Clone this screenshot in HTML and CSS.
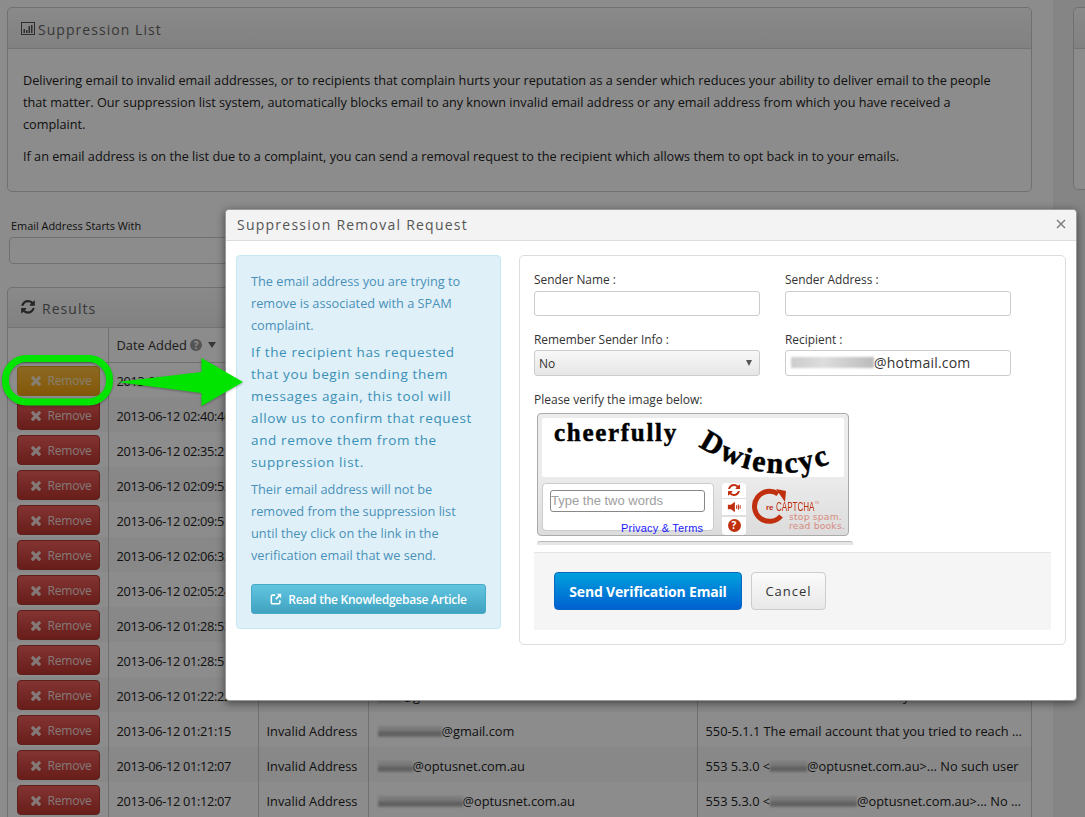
FILE: index.html
```html
<!DOCTYPE html>
<html lang="en">
<head>
<meta charset="utf-8">
<title>Suppression List</title>
<link rel="stylesheet" href="styles.css">
</head>
<body>
<svg class="defs" width="0" height="0" aria-hidden="true">
  <symbol id="i-x" viewBox="0 0 1408 1792"><path d="M1298 1322q0 40-28 68l-136 136q-28 28-68 28t-68-28l-294-294-294 294q-28 28-68 28t-68-28l-136-136q-28-28-28-68t28-68l294-294-294-294q-28-28-28-68t28-68l136-136q28-28 68-28t68 28l294 294 294-294q28-28 68-28t68 28l136 136q28 28 28 68t-28 68l-294 294 294 294q28 28 28 68z"/></symbol>
  <symbol id="i-refresh" viewBox="0 0 1536 1792"><path d="M1511 928q0 5-1 7-64 268-268 434.500t-478 166.500q-146 0-282.500-55t-243.500-157l-129 129q-19 19-45 19t-45-19-19-45v-448q0-26 19-45t45-19h448q26 0 45 19t19 45-19 45l-137 137q71 66 161 102t187 36q134 0 250-65t186-179q11-17 53-117 8-23 30-23h192q13 0 22.500 9.500t9.500 22.500zm25-800v448q0 26-19 45t-45 19h-448q-26 0-45-19t-19-45 19-45l138-138q-148-137-349-137-134 0-250 65t-186 179q-11 17-53 117-8 23-30 23h-199q-13 0-22.500-9.500t-9.500-22.500v-7q65-268 270-434.500t480-166.500q146 0 284 55.500t245 156.500l130-129q19-19 45-19t45 19 19 45z"/></symbol>
</svg>

<div class="page">
  <main class="main">
    <section class="panel intro">
      <header class="panel-head">
        <svg class="chart-icon" viewBox="0 0 14 13"><rect x="0.5" y="0.5" width="13" height="12" fill="none" stroke="currentColor"/><path d="M2.500 7h1.500v4H2.500zM5 8h1.500v3H5zM7.500 4h1.500v7H7.500zM10 3h1.500v8H10z" fill="currentColor"/></svg>
        <h2 class="panel-title">Suppression List</h2>
      </header>
      <div class="panel-body">
        <p>Delivering email to invalid email addresses, or to recipients that complain hurts your reputation as a sender which reduces your ability to deliver email to the people<br>that matter. Our suppression list system, automatically blocks email to any known invalid email address or any email address from which you have received a<br>complaint.</p>
        <p>If an email address is on the list due to a complaint, you can send a removal request to the recipient which allows them to opt back in to your emails.</p>
      </div>
    </section>

    <div class="filter">
      <label class="filter-label">Email Address Starts With</label>
      <div class="filter-input"></div>
    </div>

    <section class="panel results">
      <header class="panel-head results-head">
        <svg class="refresh-icon"><use href="#i-refresh"/></svg>
        <h2 class="panel-title">Results</h2>
      </header>
      <table class="grid">
        <colgroup><col class="c1"><col class="c2"><col class="c3"><col class="c4"><col class="c5"></colgroup>
        <thead>
          <tr><th></th><th>Date Added <span class="help">?</span> <span class="caret"></span></th><th></th><th></th><th></th></tr>
        </thead>
        <tbody>
          <tr><td><button class="remove hot"><svg class="x"><use href="#i-x"/></svg>Remove</button></td><td>2013-06-12 02:41:08</td><td></td><td></td><td></td></tr>
          <tr><td><button class="remove"><svg class="x"><use href="#i-x"/></svg>Remove</button></td><td>2013-06-12 02:40:46</td><td></td><td></td><td></td></tr>
          <tr><td><button class="remove"><svg class="x"><use href="#i-x"/></svg>Remove</button></td><td>2013-06-12 02:35:21</td><td></td><td></td><td></td></tr>
          <tr><td><button class="remove"><svg class="x"><use href="#i-x"/></svg>Remove</button></td><td>2013-06-12 02:09:52</td><td></td><td></td><td></td></tr>
          <tr><td><button class="remove"><svg class="x"><use href="#i-x"/></svg>Remove</button></td><td>2013-06-12 02:09:51</td><td></td><td></td><td></td></tr>
          <tr><td><button class="remove"><svg class="x"><use href="#i-x"/></svg>Remove</button></td><td>2013-06-12 02:06:33</td><td></td><td></td><td></td></tr>
          <tr><td><button class="remove"><svg class="x"><use href="#i-x"/></svg>Remove</button></td><td>2013-06-12 02:05:24</td><td></td><td></td><td></td></tr>
          <tr><td><button class="remove"><svg class="x"><use href="#i-x"/></svg>Remove</button></td><td>2013-06-12 01:28:53</td><td></td><td></td><td></td></tr>
          <tr><td><button class="remove"><svg class="x"><use href="#i-x"/></svg>Remove</button></td><td>2013-06-12 01:28:51</td><td></td><td></td><td></td></tr>
          <tr><td><button class="remove"><svg class="x"><use href="#i-x"/></svg>Remove</button></td><td>2013-06-12 01:22:22</td><td>Invalid Address</td><td><span class="blur w24"></span>@gmail.com</td><td>550-5.1.1 The email account that you tried to reach …</td></tr>
          <tr><td><button class="remove"><svg class="x"><use href="#i-x"/></svg>Remove</button></td><td>2013-06-12 01:21:15</td><td>Invalid Address</td><td><span class="blur w64"></span>@gmail.com</td><td>550-5.1.1 The email account that you tried to reach …</td></tr>
          <tr><td><button class="remove"><svg class="x"><use href="#i-x"/></svg>Remove</button></td><td>2013-06-12 01:12:07</td><td>Invalid Address</td><td><span class="blur w35"></span>@optusnet.com.au</td><td>553 5.3.0 &lt;<span class="blur w37"></span>@optusnet.com.au&gt;... No such user</td></tr>
          <tr><td><button class="remove"><svg class="x"><use href="#i-x"/></svg>Remove</button></td><td>2013-06-12 01:12:07</td><td>Invalid Address</td><td><span class="blur w85"></span>@optusnet.com.au</td><td>553 5.3.0 &lt;<span class="blur w87"></span>@optusnet.com.au&gt;... No …</td></tr>
        </tbody>
      </table>
    </section>
  </main>
  <aside class="side">
    <section class="panel side-panel"><header class="panel-head"></header></section>
  </aside>
</div>

<div class="backdrop"></div>

<div class="modal">
  <header class="modal-head">
    <h3 class="modal-title">Suppression Removal Request</h3>
    <svg class="close" viewBox="0 0 10 10"><path d="M1 1l8 8M9 1l-8 8" fill="none" stroke="currentColor" stroke-width="1.300"/></svg>
  </header>
  <div class="modal-body">
    <aside class="notice">
      <p>The email address you are trying to remove is associated with a SPAM complaint.</p>
      <p class="lead">If the recipient has requested that you begin sending them messages again, this tool will allow us to confirm that request and remove them from the suppression list.</p>
      <p>Their email address will not be removed from the suppression list<br>until they click on the link in the verification email that we send.</p>
      <a class="kb-btn">
        <svg class="ext" viewBox="0 0 14 14"><path d="M6 2.500H3a1.500 1.500 0 0 0-1.500 1.500v7A1.500 1.500 0 0 0 3 12.500h7a1.500 1.500 0 0 0 1.500-1.500V8.500" fill="none" stroke="currentColor" stroke-width="1.800"/><path d="M8 1h5v5l-1.800-1.800L7.500 8 6 6.500l3.800-3.700z" fill="currentColor"/></svg>
        Read the Knowledgebase Article
      </a>
    </aside>
    <form class="form-box">
      <div class="fields">
        <div class="field"><label>Sender Name :</label><div class="input"></div></div>
        <div class="field"><label>Sender Address :</label><div class="input"></div></div>
        <div class="field"><label>Remember Sender Info :</label><div class="input select">No<span class="select-caret"></span></div></div>
        <div class="field"><label>Recipient :</label><div class="input recipient"><span class="blur w83"></span>@hotmail.com</div></div>
      </div>
      <div class="verify-label">Please verify the image below:</div>
      <div class="captcha">
        <div class="captcha-img">
          <span class="word-one">cheerfully</span>
          <svg class="word-two" viewBox="0 0 150 59">
            <path id="captcha-curve" d="M0 28 Q 70 74 140 42" fill="none"/>
            <text class="word-two-text"><textPath href="#captcha-curve">Dwiencyc</textPath></text>
          </svg>
        </div>
        <div class="captcha-row">
          <div class="captcha-entry">
            <div class="captcha-input">Type the two words</div>
          </div>
          <div class="captcha-tools">
            <span class="tool"><svg class="tool-icon"><use href="#i-refresh"/></svg></span>
            <span class="tool"><svg class="tool-icon" viewBox="0 0 16 14"><path d="M1 4.500h3.500L9 1v12L4.500 9.500H1z"/><path d="M11 5v4M13 4v6M15 5v4" stroke="currentColor" stroke-width="1.200"/></svg></span>
            <span class="tool last"><span class="tool-help">?</span></span>
          </div>
          <div class="captcha-brand">
            <div class="brand-top">
              <svg class="brand-arc" viewBox="0 0 36 38"><path d="M26 6 A 15 15 0 1 0 29 28" fill="none" stroke="currentColor" stroke-width="5"/><path d="M24 1 L34 3 L33 14 z" fill="currentColor"/></svg>
              <span class="brand-re">Re</span><span class="brand-name">CAPTCHA<sup>™</sup></span>
            </div>
            <div class="brand-tag">stop spam.<br>read books.</div>
          </div>
        </div>
        <a class="captcha-link">Privacy &amp; Terms</a>
      </div>
      <div class="captcha-stub"></div>
      <footer class="form-actions">
        <button type="button" class="btn-send">Send Verification Email</button>
        <button type="button" class="btn-cancel">Cancel</button>
      </footer>
    </form>
  </div>
</div>

<svg class="callout" viewBox="0 0 250 60" aria-hidden="true">
  <rect x="5.500" y="8.500" width="104" height="43.500" rx="21" fill="none" stroke="#00e400" stroke-width="7"/>
  <path d="M117 32 L201.500 22 L201.500 8 L243 32 L201.500 56 L201.500 43 Z" fill="#00e400"/>
</svg>
</body>
</html>
```

FILE: styles.css
```css
* { box-sizing: border-box; }
html, body { margin: 0; height: 100%; }
body {
  width: 1085px;
  height: 817px;
  overflow: hidden;
  background: #fff;
  font-family: "Open Sans", "Liberation Sans", sans-serif;
  font-size: 13px;
  color: #333;
  position: relative;
}
.defs { position: absolute; }

.page { display: flex; height: 817px; overflow: hidden; }
.main { width: 1053px; flex: none; padding: 7px 21px 0 7px; }
.side { flex: 1; background: #f3f3f3; padding: 7px 0 0 20px; }
.side-panel { height: 183px; width: 40px; border-right: 0; border-radius: 5px 0 0 5px; }

.panel { border: 1px solid #ccc; border-radius: 5px; background: #fff; }
.panel-head {
  height: 41px;
  display: flex;
  align-items: center;
  padding: 0 13px;
  background: linear-gradient(#fafafa, #ececec);
  border-bottom: 1px solid #d4d4d4;
  border-radius: 5px 5px 0 0;
  color: #666;
}
.panel-title { margin: 2px 0 0; font-size: 14px; font-weight: 400; letter-spacing: 1.050px; color: #666; }
.chart-icon { width: 14px; height: 13px; margin-right: 3px; color: #555; }
.refresh-icon { width: 14px; height: 16px; margin-right: 7px; fill: #444; }

.intro { height: 185px; }
.panel-body { padding: 20px 15px 0; }
.panel-body p { margin: 0 0 10px; font-size: 12.700px; line-height: 22px; color: #222; white-space: nowrap; }

.filter { padding-left: 2px; margin-top: 27px; }
.filter-label { display: block; font-size: 10.900px; line-height: 14px; margin: 0 0 4px 2px; color: #222; }
.filter-input { height: 27px; margin-right: 2px; border: 1px solid #ccc; border-radius: 4px; background: #fff; }

.results { margin-top: 23px; height: 560px; overflow: hidden; }
.results-head { height: 40px; }

.grid { width: 1024px; table-layout: fixed; border-collapse: collapse; }
.c1 { width: 100px; }
.c2 { width: 150px; }
.c3 { width: 110px; }
.c4 { width: 329px; }
.c5 { width: 335px; }
.grid th, .grid td {
  height: 35px;
  padding: 2px 8px 0;
  border-left: 1px solid #ccc;
  text-align: left;
  font-weight: 400;
  font-size: 12.800px;
  color: #222;
  white-space: nowrap;
  overflow: hidden;
}
.grid td:nth-child(2) { letter-spacing: -.33px; }
.grid td:nth-child(4) { padding-left: 9px; }
.grid th { height: 34px; padding-top: 1px; border-bottom: 1px solid #ccc; color: #333; }
.grid th:first-child, .grid td:first-child { border-left: 0; padding: 0 0 0 9px; vertical-align: top; }
.grid tbody tr:nth-child(even) td { background: #f7f7f7; }
.help {
  display: inline-block;
  width: 12px;
  height: 12px;
  border-radius: 50%;
  background: #999;
  color: #fff;
  font-size: 10px;
  font-weight: 700;
  line-height: 12px;
  text-align: center;
  vertical-align: 1px;
}
.caret {
  display: inline-block;
  margin-left: 3px;
  border-left: 4px solid transparent;
  border-right: 4px solid transparent;
  border-top: 6px solid #666;
  vertical-align: 2px;
}
.remove {
  display: flex;
  align-items: center;
  justify-content: center;
  width: 83px;
  height: 30px;
  margin-top: 3px;
  padding: 0 0 0 5px;
  border: 1px solid #b03a32;
  border-radius: 4px;
  background: linear-gradient(#ee5f5b, #bd362f);
  color: #f0dcd9;
  font: 12px "Open Sans", sans-serif;
  letter-spacing: -.2px;
}
.remove.hot { background: linear-gradient(#ffbf40, #f0a010); border-color: #e0a020; color: #f5e6c8; }
.x { width: 12px; height: 15px; margin-right: 5px; fill: currentColor; }

.blur {
  display: inline-block;
  height: 11px;
  vertical-align: -1px;
  background: linear-gradient(#e2e2e2 30%, #a8a8a8 70%, #c5c5c5);
  filter: blur(1.200px);
}
.w24 { width: 24px; }
.w35 { width: 35px; }
.w37 { width: 37px; }
.w64 { width: 64px; }
.w83 { width: 83px; background: linear-gradient(90deg, #ccc, #ddd 40%, #bbb); }
.w85 { width: 85px; }
.w87 { width: 87px; }

.backdrop { position: absolute; inset: 0; background: rgba(0, 0, 0, .45); }

.modal {
  position: absolute;
  left: 225px;
  top: 209px;
  width: 852px;
  height: 492px;
  background: #fff;
  border: 1px solid #999;
  border-radius: 4px;
  box-shadow: 0 2px 8px rgba(0, 0, 0, .5);
}
.modal-head {
  height: 31px;
  display: flex;
  align-items: center;
  justify-content: space-between;
  padding: 0 10px 2px 11px;
  background: #f3f3f3;
  border-bottom: 1px solid #ddd;
  border-radius: 4px 4px 0 0;
}
.modal-title { margin: 0; font-size: 14px; font-weight: 400; letter-spacing: 1.240px; color: #555; }
.close { width: 10px; height: 10px; color: #777; }
.modal-body { display: flex; align-items: flex-start; gap: 18px; padding: 14px 10px 0; }

.notice {
  width: 265px;
  height: 374px;
  flex: none;
  padding: 14px 14px 0;
  background: #dff0f8;
  border: 1px solid #c5e8f3;
  border-radius: 4px;
}
.notice p { margin: 0 0 5px; font-size: 12.750px; line-height: 22px; color: #4a90b8; }
.notice .lead { font-size: 13.500px; letter-spacing: .63px; color: #3a8fb5; }
.kb-btn {
  display: flex;
  align-items: center;
  justify-content: center;
  height: 30px;
  margin-top: 18px;
  background: linear-gradient(#62c5e0, #3fa3c1);
  border: 1px solid #4aa9c6;
  border-radius: 3px;
  color: #fff;
  font-size: 12px;
  font-weight: 600;
  letter-spacing: -.25px;
}
.ext { width: 12px; height: 12px; margin-right: 6px; }

.form-box {
  width: 547px;
  height: 390px;
  padding: 14px 14px 0;
  border: 1px solid #ddd;
  border-radius: 5px;
}
.fields { display: grid; grid-template-columns: 226px 226px; column-gap: 25px; row-gap: 13px; }
.field label { display: block; height: 21px; line-height: 18px; font-size: 11.900px; color: #333; }
.field:nth-child(n+3) label { line-height: 20px; }
.input { height: 25px; border: 1px solid #ccc; border-radius: 3px; background: #fff; }
.select {
  height: 26px;
  display: flex;
  align-items: center;
  justify-content: space-between;
  padding: 0 7px 0 4px;
  background: linear-gradient(#f8f8f8, #e6e6e6);
  font-size: 12px;
}
.select-caret { border-left: 3.500px solid transparent; border-right: 3.500px solid transparent; border-top: 6px solid #555; }
.recipient {
  height: 26px;
  display: flex;
  align-items: center;
  padding: 0 0 2px 5px;
  font-size: 14px;
  letter-spacing: .2px;
}
.verify-label { margin-top: 15px; height: 22px; line-height: 18px; font-size: 12px; color: #333; }

.captcha {
  position: relative;
  width: 312px;
  height: 123px;
  margin-left: 3px;
  padding: 4px;
  background: linear-gradient(#ececec 50%, #dcdcdc);
  border: 1px solid #aaa;
  border-radius: 4px;
  display: flex;
  flex-direction: column;
  gap: 6px;
}
.captcha-img {
  height: 59px;
  background: #fff;
  border-radius: 2px;
  display: flex;
  align-items: flex-start;
  padding: 0 0 0 12px;
  color: #000;
  font-family: "Liberation Serif", serif;
  font-weight: 700;
}
.word-one { font-size: 25px; line-height: 30px; letter-spacing: 1.700px; -webkit-text-stroke: .5px #000; }
.word-two { width: 150px; height: 59px; margin-left: 20px; flex: none; overflow: visible; }
.word-two-text { font: 700 30px "Liberation Serif", serif; letter-spacing: 2.200px; fill: #000; stroke: #000; stroke-width: .5px; }
.captcha-row { display: flex; height: 48px; }
.captcha-entry { width: 172px; padding: 6px 8px 0 7px; background: #fff; border: 1px solid #ccc; border-radius: 4px; }
.captcha-input {
  height: 22px;
  border: 1px solid #888;
  border-radius: 3px;
  padding-left: 0;
  font: 13px/20px "Liberation Sans", sans-serif;
  color: #a0a0a0;
}
.captcha-tools {
  width: 24px;
  height: 52px;
  margin-left: 8px;
  display: flex;
  flex-direction: column;
  color: #c0300f;
  fill: #c0300f;
}
.tool {
  flex: 1;
  display: flex;
  align-items: center;
  justify-content: center;
  background: #fff;
  border-bottom: 1px solid #ddd;
}
.tool:first-child { border-radius: 4px 4px 0 0; }
.tool.last { flex: 1.200; margin-top: 1px; border-bottom: 0; border-radius: 0 0 4px 4px; }
.tool-icon { width: 14px; height: 14px; }
.tool-help {
  width: 13px;
  height: 13px;
  border-radius: 50%;
  background: #c0300f;
  color: #fff;
  font-size: 10px;
  font-weight: 700;
  line-height: 13px;
  text-align: center;
}
.captcha-brand { flex: 1; margin-left: 6px; color: #c0300f; position: relative; }
.brand-top { display: flex; align-items: center; margin-top: 5px; }
.brand-arc { width: 36px; height: 38px; margin-right: -22px; flex: none; }
.brand-re { font: 700 8px "Liberation Sans", sans-serif; text-transform: lowercase; }
.brand-name { margin-left: 2px; font: 400 12px/10px "Liberation Sans", sans-serif; transform: scaleX(.67); transform-origin: left; }
.brand-name sup { font-size: 7px; line-height: 0; color: #d88b80; }
.brand-tag { position: absolute; right: -1px; bottom: 1px; font: 9.200px/9px "DejaVu Sans", sans-serif; letter-spacing: .2px; color: #d88b80; }
.captcha-link {
  position: absolute;
  left: 83px;
  bottom: 1px;
  font: 11px/12px "Liberation Sans", sans-serif;
  letter-spacing: .2px;
  color: #1a1aff;
}
.captcha-stub { width: 316px; height: 4px; margin: 5px 0 0 3px; background: #e6e6e6; border-top: 1px solid #bbb; border-radius: 3px 3px 0 0; }

.form-actions {
  display: flex;
  gap: 9px;
  height: 78px;
  margin-top: 7px;
  padding: 19px 0 0 20px;
  background: #f5f5f5;
  border-top: 1px solid #e5e5e5;
}
.btn-send {
  width: 188px;
  height: 38px;
  padding: 0;
  border: 1px solid #0a66c0;
  border-radius: 4px;
  background: linear-gradient(#00a0dd, #0060d0);
  color: #fff;
  font: 700 14px "Open Sans", sans-serif;
  letter-spacing: -.18px;
}
.btn-cancel {
  width: 75px;
  height: 38px;
  padding: 0;
  border: 1px solid #ccc;
  border-radius: 4px;
  background: linear-gradient(#fafafa, #e8e8e8);
  color: #333;
  font: 13px "Open Sans", sans-serif;
  letter-spacing: 1px;
}

.callout {
  position: absolute;
  left: 0;
  top: 350px;
  width: 250px;
  height: 60px;
  filter: drop-shadow(0 1px 1px rgba(0, 0, 0, .3));
}
```
